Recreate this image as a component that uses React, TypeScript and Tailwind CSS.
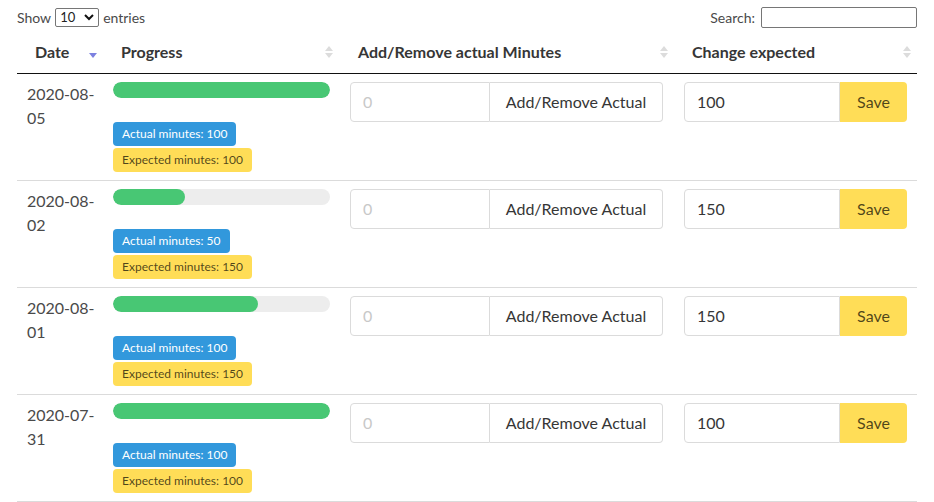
import React from "react";

const rows = [
  { d1: "2020-08-", d2: "05", actual: 100, expected: 100 },
  { d1: "2020-08-", d2: "02", actual: 50, expected: 150 },
  { d1: "2020-08-", d2: "01", actual: 100, expected: 150 },
  { d1: "2020-07-", d2: "31", actual: 100, expected: 100 },
];

function SortBoth() {
  return (
    <svg width="8" height="16" viewBox="0 0 8 16" className="shrink-0">
      <path d="M4 2 L8 7 L0 7 Z" fill="#dcdcdc" />
      <path d="M0 9 L8 9 L4 14 Z" fill="#dcdcdc" />
    </svg>
  );
}

function SortDesc() {
  return (
    <svg width="8" height="16" viewBox="0 0 8 16" className="shrink-0">
      <path d="M0 9 L8 9 L4 14 Z" fill="#7c81e0" />
    </svg>
  );
}

export default function App() {
  return (
    <div
      className="w-[934px] h-[502px] bg-white text-[#4a4a4a] overflow-hidden"
      style={{ fontFamily: '"Segoe UI", Lato, "Noto Sans", sans-serif' }}
    >
      <div className="mx-[17px] w-[900px]">
        <div className="flex justify-between items-center h-[30px] pt-[5px] text-[14px]">
          <div className="flex items-center">
            <span>Show</span>
            <div className="mx-[4px] h-[19px] w-[44px] border border-[#767676] rounded-[2px] flex items-center justify-between px-[4px] text-[13px]">
              <span className="text-[#222]">10</span>
              <svg width="10" height="7" viewBox="0 0 10 7">
                <path d="M1 1 L5 5 L9 1" stroke="#111" strokeWidth="2" fill="none" />
              </svg>
            </div>
            <span>entries</span>
          </div>
          <div className="flex items-center">
            <span>Search:</span>
            <div className="ml-[6px] h-[21px] w-[156px] border border-[#767676] rounded-[2px]" />
          </div>
        </div>
        <table className="w-[900px] table-fixed border-collapse">
          <colgroup>
            <col className="w-[86px]" />
            <col className="w-[237px]" />
            <col className="w-[334px]" />
            <col className="w-[243px]" />
          </colgroup>
          <thead>
            <tr className="border-b border-[#111]">
              <th className="pl-[18px] pr-[6px] pt-[10px] pb-[9px] text-left text-[16px] leading-[24px] font-bold text-[#363636]">
                <div className="flex items-center justify-between">
                  <span>Date</span>
                  <SortDesc />
                </div>
              </th>
              <th className="pl-[18px] pr-[7px] pt-[10px] pb-[9px] text-left text-[16px] leading-[24px] font-bold text-[#363636]">
                <div className="flex items-center justify-between">
                  <span>Progress</span>
                  <SortBoth />
                </div>
              </th>
              <th className="pl-[18px] pr-[6px] pt-[10px] pb-[9px] text-left text-[16px] leading-[24px] font-bold text-[#363636]">
                <div className="flex items-center justify-between">
                  <span>Add/Remove actual Minutes</span>
                  <SortBoth />
                </div>
              </th>
              <th className="pl-[18px] pr-[6px] pt-[10px] pb-[9px] text-left text-[16px] leading-[24px] font-bold text-[#363636]">
                <div className="flex items-center justify-between">
                  <span>Change expected</span>
                  <SortBoth />
                </div>
              </th>
            </tr>
          </thead>
          <tbody>
            {rows.map((r, i) => {
              const pct = Math.min(100, (r.actual / r.expected) * 100);
              return (
                <tr key={i} className="border-b border-[#dbdbdb] align-top">
                  <td className="px-[10px] pt-[8px] pb-[8px] text-[16px] leading-[24px] whitespace-nowrap">
                    <div>{r.d1}</div>
                    <div>{r.d2}</div>
                  </td>
                  <td className="px-[10px] pt-[8px] pb-[8px]">
                    <div className="h-[16px] w-[217px] rounded-full bg-[#ededed] overflow-hidden">
                      <div className="h-full bg-[#48c774] rounded-full" style={{ width: `${pct}%` }} />
                    </div>
                    <div className="mt-[24px] flex flex-col items-start gap-[2px]">
                      <span className="h-[24px] px-[9px] flex items-center rounded-[4px] bg-[#3298dc] text-white text-[12px]">
                        Actual minutes: {r.actual}
                      </span>
                      <span className="h-[24px] px-[9px] flex items-center rounded-[4px] bg-[#ffdd57] text-[rgba(0,0,0,0.7)] text-[12px]">
                        Expected minutes: {r.expected}
                      </span>
                    </div>
                  </td>
                  <td className="px-[10px] pt-[8px] pb-[8px]">
                    <div className="flex w-[313px] h-[40px]">
                      <div className="w-[140px] h-full border border-[#dbdbdb] rounded-l-[4px] flex items-center pl-[12px] text-[16px] text-[#c8c8c8]">
                        0
                      </div>
                      <div className="w-[173px] h-full border border-l-0 border-[#dbdbdb] rounded-r-[4px] flex items-center justify-center text-[16px] text-[#363636]">
                        Add/Remove Actual
                      </div>
                    </div>
                  </td>
                  <td className="px-[10px] pt-[8px] pb-[8px]">
                    <div className="flex w-[223px] h-[40px]">
                      <div className="w-[156px] h-full border border-[#dbdbdb] rounded-l-[4px] flex items-center pl-[12px] text-[16px] text-[#363636]">
                        {r.expected}
                      </div>
                      <div className="w-[67px] h-full bg-[#ffdd57] rounded-r-[4px] flex items-center justify-center text-[16px] text-[rgba(0,0,0,0.7)]">
                        Save
                      </div>
                    </div>
                  </td>
                </tr>
              );
            })}
          </tbody>
        </table>
      </div>
    </div>
  );
}
